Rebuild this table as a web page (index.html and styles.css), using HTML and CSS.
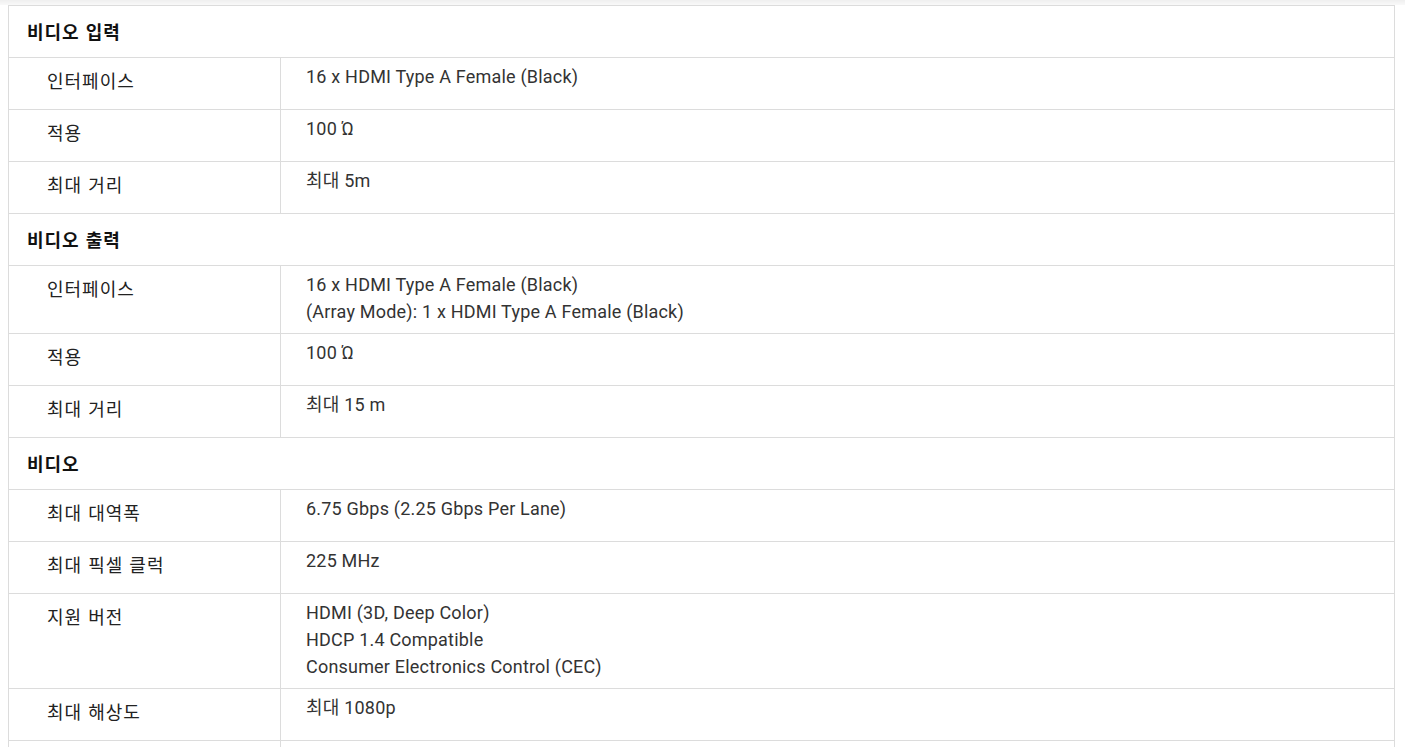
FILE: index.html
```html
<!DOCTYPE html>
<html lang="ko">
<head>
<meta charset="utf-8">
<link rel="stylesheet" href="styles.css">
</head>
<body>
<div class="topshade"></div>
<table class="spec">
  <colgroup><col class="col-label"><col class="col-value"></colgroup>
  <tbody>
    <tr class="group"><th colspan="2">비디오 입력</th></tr>
    <tr><td class="label">인터페이스</td><td class="value">16 x HDMI Type A Female (Black)</td></tr>
    <tr><td class="label">적용</td><td class="value">100 Ώ</td></tr>
    <tr><td class="label">최대 거리</td><td class="value">최대 5m</td></tr>
    <tr class="group"><th colspan="2">비디오 출력</th></tr>
    <tr><td class="label">인터페이스</td><td class="value">16 x HDMI Type A Female (Black)<br>(Array Mode): 1 x HDMI Type A Female (Black)</td></tr>
    <tr><td class="label">적용</td><td class="value">100 Ώ</td></tr>
    <tr><td class="label">최대 거리</td><td class="value">최대 15 m</td></tr>
    <tr class="group"><th colspan="2">비디오</th></tr>
    <tr><td class="label">최대 대역폭</td><td class="value">6.75 Gbps (2.25 Gbps Per Lane)</td></tr>
    <tr><td class="label">최대 픽셀 클럭</td><td class="value">225 MHz</td></tr>
    <tr><td class="label">지원 버전</td><td class="value">HDMI (3D, Deep Color)<br>HDCP 1.4 Compatible<br>Consumer Electronics Control (CEC)</td></tr>
    <tr><td class="label">최대 해상도</td><td class="value">최대 1080p</td></tr>
    <tr><td class="label">&nbsp;</td><td class="value">&nbsp;</td></tr>
  </tbody>
</table>
</body>
</html>
```

FILE: styles.css
```css
html, body {
  margin: 0;
  padding: 0;
  background: #fff;
  overflow: hidden;
}
body {
  font-family: Roboto, "Noto Sans CJK KR", sans-serif;
  color: #333;
  font-size: 18px;
}
.topshade {
  height: 5px;
  background: linear-gradient(#efefef, #f9f9f9);
}
.spec {
  margin-left: 8px;
  width: 1387px;
  border-collapse: collapse;
  table-layout: fixed;
}
.col-label {
  width: 272px;
}
.spec td, .spec th {
  border: 1px solid #dcdcdc;
  vertical-align: top;
  text-align: left;
}
.group th {
  height: 52px;
  box-sizing: border-box;
  padding: 0 18px 2px;
  vertical-align: middle;
  font-family: "Noto Sans CJK KR", Roboto, sans-serif;
  font-weight: 700;
  font-size: 18px;
  letter-spacing: 1px;
  color: #111;
}
.label {
  padding: 9px 20px 15px 38px;
  line-height: 27px;
  font-family: "Noto Sans CJK KR", Roboto, sans-serif;
  color: #222;
  font-size: 18px;
  letter-spacing: 1px;
}
.value {
  padding: 5px 25px 8px;
  line-height: 27px;
  color: #333;
  font-size: 18px;
  letter-spacing: 0.2px;
}
```
